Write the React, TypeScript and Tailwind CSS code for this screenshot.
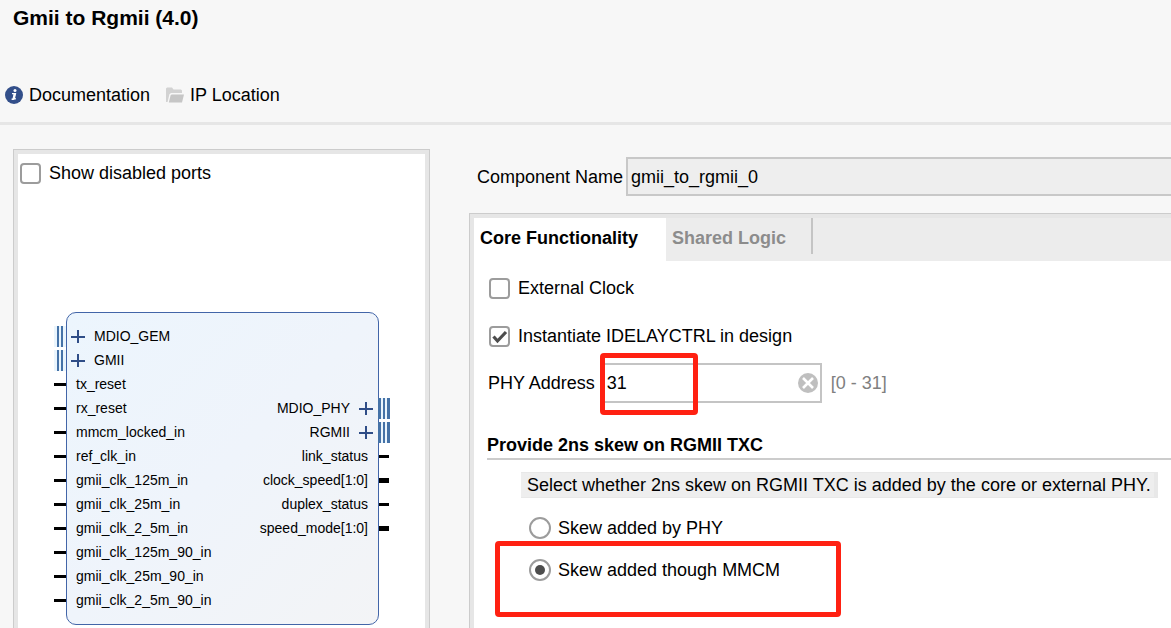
import React, { useState } from 'react';

type Port = {
  name: string;
  kind: 'wire' | 'vector' | 'bus';
};

const leftPorts: Port[] = [
  { name: 'MDIO_GEM', kind: 'bus' },
  { name: 'GMII', kind: 'bus' },
  { name: 'tx_reset', kind: 'wire' },
  { name: 'rx_reset', kind: 'wire' },
  { name: 'mmcm_locked_in', kind: 'wire' },
  { name: 'ref_clk_in', kind: 'wire' },
  { name: 'gmii_clk_125m_in', kind: 'wire' },
  { name: 'gmii_clk_25m_in', kind: 'wire' },
  { name: 'gmii_clk_2_5m_in', kind: 'wire' },
  { name: 'gmii_clk_125m_90_in', kind: 'wire' },
  { name: 'gmii_clk_25m_90_in', kind: 'wire' },
  { name: 'gmii_clk_2_5m_90_in', kind: 'wire' },
];

const rightPorts: Port[] = [
  { name: 'MDIO_PHY', kind: 'bus' },
  { name: 'RGMII', kind: 'bus' },
  { name: 'link_status', kind: 'wire' },
  { name: 'clock_speed[1:0]', kind: 'vector' },
  { name: 'duplex_status', kind: 'wire' },
  { name: 'speed_mode[1:0]', kind: 'vector' },
];

const InfoIcon = () => (
  <svg width="18" height="18" viewBox="0 0 18 18" className="shrink-0">
    <circle cx="9" cy="9" r="9" fill="#334f8a" />
    <circle cx="10" cy="4.6" r="1.5" fill="#fff" />
    <path d="M7 7.6h3.4l-1.2 5.2h1.6M6.6 13.2h2.2" stroke="#fff" strokeWidth="1.4" fill="none" />
    <path d="M9.6 7.4L8.4 13.4" stroke="#fff" strokeWidth="2" />
  </svg>
);

const FolderIcon = () => (
  <svg width="18" height="16" viewBox="0 0 18 16" className="shrink-0">
    <path d="M0 15V1.5L1 .5h5l1.5 2H15l1 1V6H5L3.4 7.2 1.6 15z" fill="#d2d2d2" />
    <path d="M4.6 8.2L5.6 7.5H18l-2 8H2.8z" fill="#c6c6c6" />
  </svg>
);

const PlusIcon = () => (
  <svg width="14" height="14" viewBox="0 0 14 14" className="shrink-0">
    <path d="M0 8h14M7 1v13" stroke="#2f4d87" strokeWidth="2" />
  </svg>
);

/* Stub drawn outside the block edge */
const Pin: React.FC<{ kind: Port['kind']; side: 'left' | 'right' }> = ({ kind, side }) => {
  if (kind === 'bus' && side === 'left') {
    return (
      <span className="absolute right-full top-0.5 mr-px flex h-[21px] w-3 items-stretch gap-0.5 bg-[#eaf5fd] pl-[3px]">
        <span className="w-0.5 bg-[#4572a7]"></span>
        <span className="w-0.5 bg-[#4572a7]"></span>
      </span>
    );
  }
  if (kind === 'bus') {
    return (
      <span className="absolute left-full top-0.5 flex h-[21px] items-stretch gap-0.5 bg-[#eaf5fd]">
        <span className="w-[3px] bg-[#4572a7]"></span>
        <span className="w-0.5 bg-[#4572a7]"></span>
        <span className="w-[3px] bg-[#4572a7]"></span>
      </span>
    );
  }
  return (
    <span
      className={`absolute bg-black ${side === 'left' ? 'right-full mr-px w-3' : 'left-full ml-px w-[10px]'} ${
        kind === 'vector' ? 'top-[10px] h-[5px]' : 'top-[11px] h-[3px]'
      }`}
    ></span>
  );
};

const PortRow: React.FC<{ port: Port; side: 'left' | 'right' }> = ({ port, side }) => {
  const isBus = port.kind === 'bus';
  return (
    <li
      className={`relative flex h-6 items-center gap-[9px] ${
        side === 'left' ? (isBus ? 'pl-1' : 'pl-[9px]') : isBus ? 'flex-row-reverse pr-[5px]' : 'flex-row-reverse pr-[10px]'
      }`}
    >
      <Pin kind={port.kind} side={side} />
      {isBus && <PlusIcon />}
      <span>{port.name}</span>
    </li>
  );
};

type CheckProps = {
  label: string;
  checked: boolean;
  onChange: (v: boolean) => void;
};

const Checkbox: React.FC<CheckProps> = ({ label, checked, onChange }) => (
  <label className="flex h-6 items-center gap-2">
    <span className="grid shrink-0">
      <input
        type="checkbox"
        checked={checked}
        onChange={(e) => onChange(e.target.checked)}
        className="col-start-1 row-start-1 size-[21px] appearance-none rounded border-2 border-[#9c9c9c] bg-white"
      />
      {checked && (
        <svg width="21" height="21" viewBox="0 0 21 21" className="pointer-events-none col-start-1 row-start-1">
          <path d="M4.5 10.5l4 4.5 8.5-9" stroke="#4d4d4d" strokeWidth="3.2" fill="none" />
        </svg>
      )}
    </span>
    <span>{label}</span>
  </label>
);

const Radio: React.FC<{ label: string; checked: boolean; onChange: () => void }> = ({ label, checked, onChange }) => (
  <label className="flex items-center gap-[7px]">
    <span className="grid shrink-0 place-items-center">
      <input
        type="radio"
        name="skew"
        checked={checked}
        onChange={onChange}
        className="col-start-1 row-start-1 size-[22px] appearance-none rounded-full border-2 border-[#9c9c9c] bg-white"
      />
      {checked && <span className="pointer-events-none col-start-1 row-start-1 size-[10px] rounded-full bg-[#4d4d4d]"></span>}
    </span>
    <span>{label}</span>
  </label>
);

const App: React.FC = () => {
  const [showDisabled, setShowDisabled] = useState(false);
  const [name, setName] = useState('gmii_to_rgmii_0');
  const [externalClock, setExternalClock] = useState(false);
  const [idelay, setIdelay] = useState(true);
  const [phyAddress, setPhyAddress] = useState('31');
  const [skew, setSkew] = useState('mmcm');

  return (
    <div className="flex h-screen flex-col overflow-hidden bg-[#f7f7f7] font-['Liberation_Sans',Arial,sans-serif] text-lg leading-6 text-black">
      <header className="shrink-0 border-b-[3px] border-[#e6e6e6] pb-[15px] pt-1.5">
        <h1 className="pl-[13px] text-[21px] leading-6 font-bold">Gmii to Rgmii (4.0)</h1>
        <nav className="mt-[53px] flex items-center gap-4 pl-[5px]">
          <a href="#documentation" className="flex items-center gap-1.5">
            <InfoIcon />
            Documentation
          </a>
          <a href="#location" className="flex items-center gap-1.5">
            <FolderIcon />
            IP Location
          </a>
        </nav>
      </header>

      <main className="flex min-h-0 flex-1 pl-[13px]">
        {/* Block symbol */}
        <section className="mt-6 w-[417px] shrink-0 border border-b-0 border-[#ccc]">
          <div className="h-full border-4 border-b-0 border-[#e6e6e6] bg-white">
            <div className="pl-0.5 pt-[7px]">
              <Checkbox label="Show disabled ports" checked={showDisabled} onChange={setShowDisabled} />
            </div>
            <div className="mr-[46px] ml-12 mt-[127px] flex h-[313px] justify-between rounded-[10px] border border-[#4265a8] bg-linear-to-br from-[#ecf5fd] via-[#eff4fb] to-[#f3f4f6] text-sm">
              <ul className="pt-[11px]">
                {leftPorts.map((p) => (
                  <PortRow key={p.name} port={p} side="left" />
                ))}
              </ul>
              <ul className="pt-[83px]">
                {rightPorts.map((p) => (
                  <PortRow key={p.name} port={p} side="right" />
                ))}
              </ul>
            </div>
          </div>
        </section>

        {/* Settings */}
        <section className="ml-[39px] mt-8 flex min-w-0 flex-1 flex-col">
          <div className="flex items-center gap-[3px] pl-2">
            <label htmlFor="component-name" className="shrink-0">Component Name</label>
            <input
              id="component-name"
              value={name}
              onChange={(e) => setName(e.target.value)}
              className="h-[39px] min-w-0 flex-1 border-2 border-r-0 border-[#c8c8c8] bg-[#eee] pl-[3px] pt-px outline-none"
            />
          </div>

          <div className="mt-[17px] flex-1 border-t border-l border-[#ccc]">
            <div className="h-full border-t-4 border-l-4 border-[#e6e6e6] bg-white">
              <div role="tablist" className="flex h-[43px] items-start bg-[#ececec]">
                <button role="tab" aria-selected="true" className="h-full w-48 bg-white pb-1 pl-1.5 text-left font-bold">
                  Core Functionality
                </button>
                <button role="tab" aria-selected="false" className="h-9 w-[147px] border-r-2 border-[#c4c4c4] pl-1.5 pt-1 text-left font-bold text-[#8c8c8c]">
                  Shared Logic
                </button>
              </div>

              <div className="pl-[13px] pt-[15px]">
                <div className="flex flex-col gap-6 pl-0.5">
                  <Checkbox label="External Clock" checked={externalClock} onChange={setExternalClock} />
                  <Checkbox label="Instantiate IDELAYCTRL in design" checked={idelay} onChange={setIdelay} />
                </div>

                <div className="mt-[15px] flex items-center pl-px">
                  <label htmlFor="phy-address" className="shrink-0">PHY Address</label>
                  <div className="relative ml-1.5 flex h-10 w-[221px] items-center border-2 border-[#c4c4c4] pr-0.5">
                    <input
                      id="phy-address"
                      value={phyAddress}
                      onChange={(e) => setPhyAddress(e.target.value)}
                      className="min-w-0 flex-1 pl-1 outline-none"
                    />
                    <button aria-label="Clear" onClick={() => setPhyAddress('')}>
                      <svg width="20" height="20" viewBox="0 0 20 20">
                        <circle cx="10" cy="10" r="10" fill="#bfbfbf" />
                        <path d="M5 5l10 10M15 5L5 15" stroke="#fff" strokeWidth="2.6" />
                      </svg>
                    </button>
                    <span className="pointer-events-none absolute -top-3 -left-[3px] h-[62px] w-[98px] rounded border-[5px] border-[#ff2112]"></span>
                  </div>
                  <span className="ml-[9px] text-[#808080]">[0 - 31]</span>
                </div>

                <h2 className="mt-[30px] border-b-2 border-[#ccc] pb-px font-bold">Provide 2ns skew on RGMII TXC</h2>
                <p className="mt-3 mr-[13px] ml-[34px] border-y border-r-4 border-[#e8e8e8] bg-[#eee] pl-1.5 whitespace-nowrap">
                  Select whether 2ns skew on RGMII TXC is added by the core or external PHY.
                </p>

                <div className="relative mt-[18px] flex flex-col gap-[18px] pl-[42px]">
                  <Radio label="Skew added by PHY" checked={skew === 'phy'} onChange={() => setSkew('phy')} />
                  <Radio label="Skew added though MMCM" checked={skew === 'mmcm'} onChange={() => setSkew('mmcm')} />
                  <span className="pointer-events-none absolute top-[25px] left-2 h-[76px] w-[346px] rounded border-[5px] border-[#ff2112]"></span>
                </div>
              </div>
            </div>
          </div>
        </section>
      </main>
    </div>
  );
};

export default App;
